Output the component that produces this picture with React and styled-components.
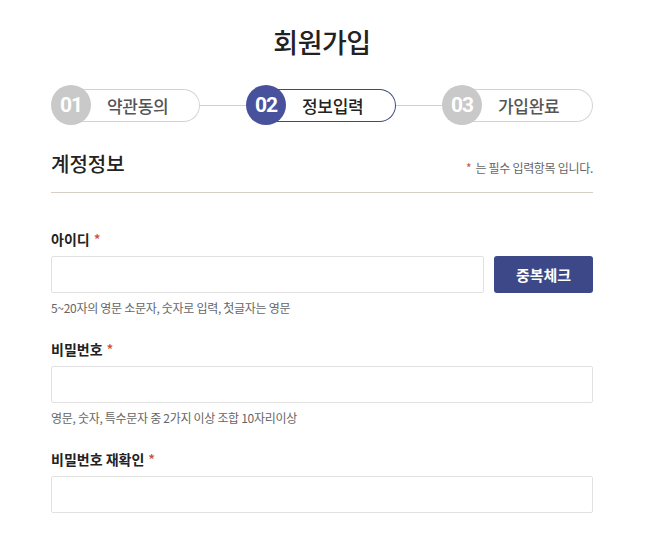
import styled, { createGlobalStyle } from "styled-components";

const GlobalStyle = createGlobalStyle`
  body {
    margin: 0;
    background: #fff;
    font-family: "Noto Sans CJK KR", "Noto Sans", sans-serif;
    color: #222;
  }
`;

const Page = styled.div`
  width: 542px;
  margin-left: 51px;
  padding-top: 22px;
`;

const Title = styled.h1`
  margin: 0;
  text-align: center;
  font-size: 27px;
  font-weight: 500;
  line-height: 40px;
  letter-spacing: -0.5px;
  color: #222;
`;

const Steps = styled.div`
  display: flex;
  align-items: center;
  margin-top: 23px;
  height: 40px;
`;

const Step = styled.div`
  display: flex;
  align-items: center;
  width: ${(p) => p.$width}px;
  flex-shrink: 0;
`;

const Circle = styled.div`
  position: relative;
  z-index: 1;
  width: 40px;
  height: 40px;
  border-radius: 50%;
  flex-shrink: 0;
  background: ${(p) => (p.$active ? "#48529c" : "#c9c9c9")};
  color: #fff;
  display: flex;
  align-items: center;
  justify-content: center;
  font-family: Roboto, "Liberation Sans", sans-serif;
  font-size: 21px;
  font-weight: 700;
  letter-spacing: -1px;
`;

const Pill = styled.div`
  flex: 1;
  height: 33px;
  box-sizing: border-box;
  margin-left: -20px;
  padding-left: 36px;
  border: 1px solid ${(p) => (p.$active ? "#3d4886" : "#d3d3d3")};
  border-left: none;
  border-radius: 0 17px 17px 0;
  display: flex;
  align-items: center;
  font-size: 17px;
  font-weight: 500;
  color: ${(p) => (p.$active ? "#222" : "#555")};
  letter-spacing: -0.3px;
`;

const Connector = styled.div`
  flex: 1;
  height: 1px;
  background: #cfcfcf;
`;

const SectionHead = styled.div`
  display: flex;
  justify-content: space-between;
  align-items: center;
  margin-top: 24px;
  padding-bottom: 13px;
  border-bottom: 1px solid #d8d0c4;
`;

const SectionTitle = styled.h2`
  margin: 0;
  font-size: 20px;
  font-weight: 500;
  line-height: 30px;
  color: #222;
`;

const Note = styled.span`
  font-size: 12px;
  color: #666;
  padding-top: 6px;
  letter-spacing: -0.3px;
`;

const Star = styled.span`
  color: #c8503f;
  margin-right: 4px;
`;

const Form = styled.div`
  padding-top: 36px;
`;

const Field = styled.div`
  margin-bottom: ${(p) => p.$gap}px;
`;

const Label = styled.div`
  font-size: 14px;
  font-weight: 700;
  line-height: 20px;
  color: #222;
  margin-bottom: 7px;

  span {
    color: #c8503f;
    margin-left: 4px;
    font-weight: 500;
  }
`;

const Row = styled.div`
  display: flex;
  gap: 10px;
`;

const Input = styled.input`
  flex: 1;
  height: 37px;
  box-sizing: border-box;
  border: 1px solid #e1e1e1;
  border-radius: 2px;
  padding: 0 12px;
  font-family: inherit;
  font-size: 14px;
  outline: none;
`;

const CheckButton = styled.button`
  width: 99px;
  height: 37px;
  border: none;
  border-radius: 3px;
  background: #3c4888;
  color: #fff;
  font-family: inherit;
  font-size: 15px;
  font-weight: 700;
`;

const Hint = styled.div`
  margin-top: 6px;
  font-size: 12px;
  line-height: 18px;
  color: #666;
  letter-spacing: -0.3px;
`;

const steps = [
  { no: "01", label: "약관동의", width: 149 },
  { no: "02", label: "정보입력", width: 150, active: true },
  { no: "03", label: "가입완료", width: 151 },
];

export default function App() {
  return (
    <>
      <GlobalStyle />
      <Page>
        <Title>회원가입</Title>
        <Steps>
          {steps.map((s, i) => [
            i > 0 && <Connector key={"c" + i} />,
            <Step key={s.no} $width={s.width}>
              <Circle $active={s.active}>{s.no}</Circle>
              <Pill $active={s.active}>{s.label}</Pill>
            </Step>,
          ])}
        </Steps>

        <SectionHead>
          <SectionTitle>계정정보</SectionTitle>
          <Note>
            <Star>*</Star>는 필수 입력항목 입니다.
          </Note>
        </SectionHead>

        <Form>
          <Field $gap={22}>
            <Label>
              아이디<span>*</span>
            </Label>
            <Row>
              <Input type="text" />
              <CheckButton>중복체크</CheckButton>
            </Row>
            <Hint>5~20자의 영문 소문자, 숫자로 입력, 첫글자는 영문</Hint>
          </Field>
          <Field $gap={22}>
            <Label>
              비밀번호<span>*</span>
            </Label>
            <Row>
              <Input type="password" />
            </Row>
            <Hint>영문, 숫자, 특수문자 중 2가지 이상 조합 10자리이상</Hint>
          </Field>
          <Field $gap={0}>
            <Label>
              비밀번호 재확인<span>*</span>
            </Label>
            <Row>
              <Input type="password" />
            </Row>
          </Field>
        </Form>
      </Page>
    </>
  );
}
